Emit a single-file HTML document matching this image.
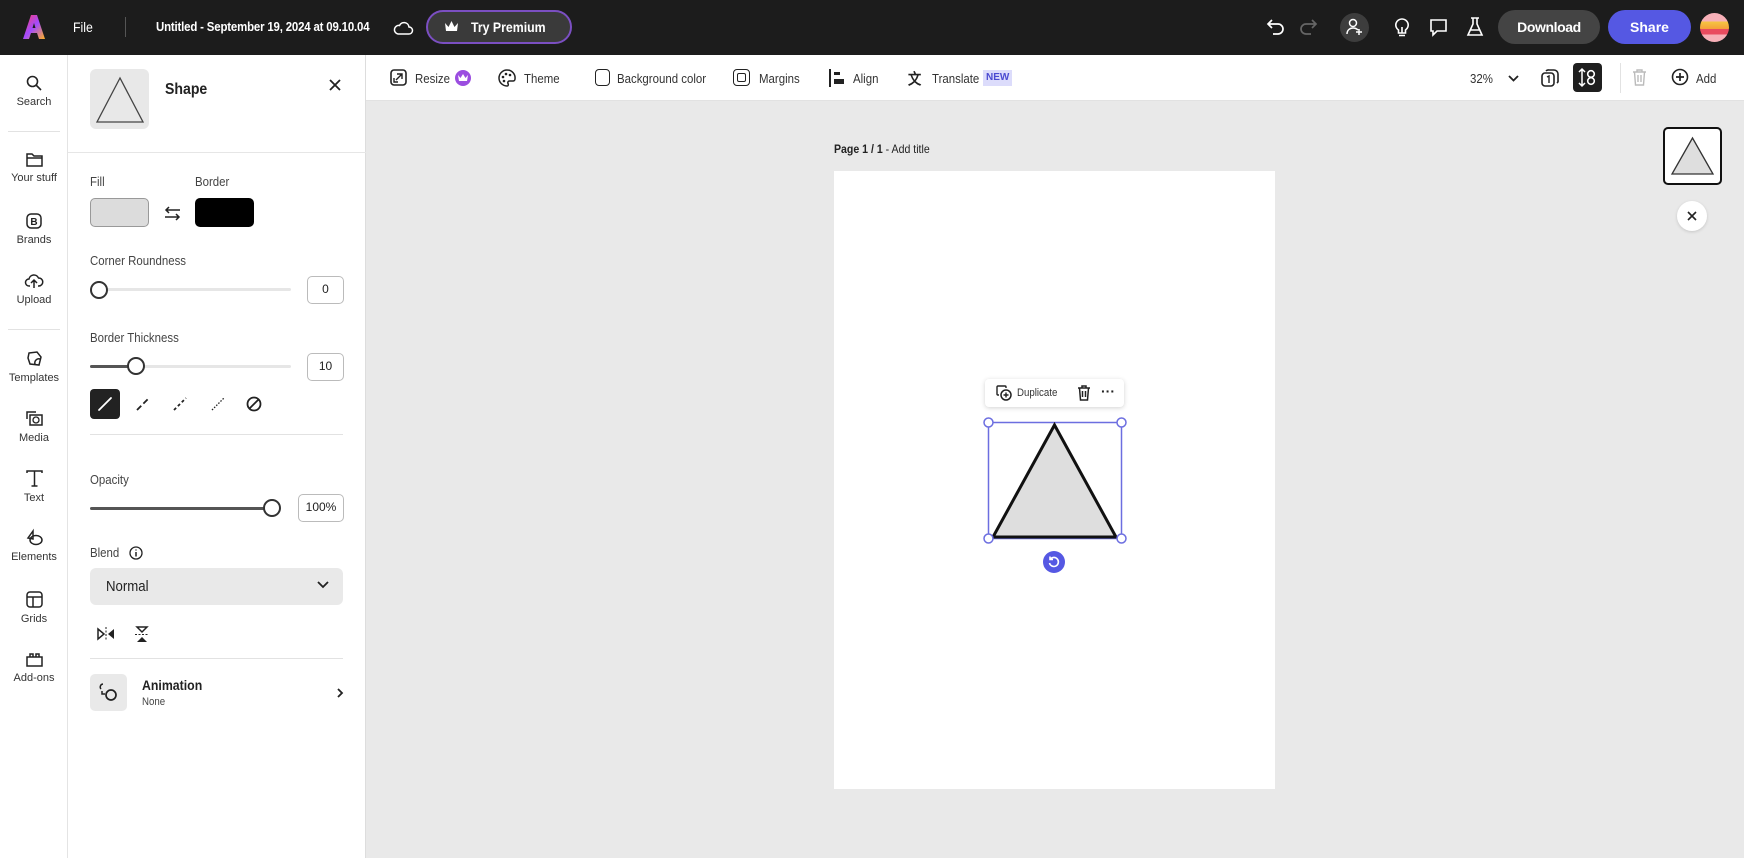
<!DOCTYPE html>
<html><head><meta charset="utf-8"><style>
*{box-sizing:border-box;margin:0;padding:0}
body{width:1744px;height:858px;overflow:hidden;font-family:"Liberation Sans",sans-serif;color:#222;background:#e9e9e9;position:relative}
.a{position:absolute}
.hdr{left:0;top:0;width:1744px;height:55px;background:#1c1c1c;color:#fff}
.t{white-space:nowrap;transform:scaleX(.88);transform-origin:0 50%}
.nc{transform:none}
.rail{left:0;top:55px;width:68px;height:803px;background:#fff;border-right:1px solid #e4e4e4}
.ri{position:absolute;left:0;width:68px;text-align:center;font-size:11px;color:#333}
.ri svg{display:block;margin:0 auto 5px}
.panel{left:68px;top:55px;width:298px;height:803px;background:#fff;border-right:1px solid #ddd}
.tb{left:366px;top:55px;width:1378px;height:46px;background:#fff;border-bottom:1px solid #e2e2e2}
.lbl{font-size:13px;color:#444}
.box{border:1.5px solid #bbb;border-radius:5px;font-size:12px;text-align:center;background:#fff}
.tbt{font-size:13px;color:#333;top:16px}
svg{overflow:visible}
</style></head><body>
<div class="a hdr">
 <svg class="a" style="left:23px;top:15px" width="22" height="24" viewBox="0 0 22 24"><defs><linearGradient id="g" x1="0" y1="0" x2="1" y2="1"><stop offset="0" stop-color="#ff3b6b"/><stop offset=".5" stop-color="#a24bff"/><stop offset="1" stop-color="#ffb020"/></linearGradient></defs><path d="M8 0h6l8 24h-6l-2-6H8l-2 6H0z M9.5 13h3L11 8z" fill="url(#g)" fill-rule="evenodd"/></svg>
 <div class="a t" style="left:73px;top:19px;font-size:14px">File</div>
 <div class="a" style="left:125px;top:17px;width:1px;height:20px;background:#555"></div>
 <div class="a t" style="left:156px;top:19px;font-size:13px;font-weight:bold;letter-spacing:-.2px">Untitled - September 19, 2024 at 09.10.04</div>
 <svg class="a" style="left:393px;top:19px" width="20" height="16" viewBox="0 0 20 16"><path d="M5 15h11a3.5 3.5 0 0 0 0-7 5 5 0 0 0-9.5-1.5A4 4 0 0 0 5 15z" fill="none" stroke="#fff" stroke-width="1.5"/></svg>
 <div class="a" style="left:426px;top:10px;width:146px;height:34px;border-radius:17px;background:#3a3a3a;border:2px solid #7b4fc2"></div>
 <svg class="a" style="left:444px;top:21px" width="15" height="12" viewBox="0 0 15 12"><path d="M1 2l3.5 4L7.5 0l3 6L14 2l-1 8H2z" fill="#fff"/></svg>
 <div class="a t" style="left:471px;top:19px;font-size:14px;font-weight:bold">Try Premium</div>
 <svg class="a" style="left:1266px;top:17px" width="20" height="20" viewBox="0 0 20 20"><path d="M6 3L2 7l4 4M2 7h10a5 5 0 0 1 0 10H7" fill="none" stroke="#fff" stroke-width="1.7"/></svg>
 <svg class="a" style="left:1298px;top:17px" width="20" height="20" viewBox="0 0 20 20"><path d="M14 3l4 4-4 4M18 7H8a5 5 0 0 0 0 10h5" fill="none" stroke="#666" stroke-width="1.7"/></svg>
 <div class="a" style="left:1340px;top:13px;width:29px;height:29px;border-radius:50%;background:#3d3d3d"></div>
 <svg class="a" style="left:1346px;top:18px" width="18" height="18" viewBox="0 0 18 18"><circle cx="7" cy="5" r="3.5" fill="none" stroke="#fff" stroke-width="1.5"/><path d="M1 16c0-4 3-6 6-6s4 1 5 2M13 11v6M10 14h6" fill="none" stroke="#fff" stroke-width="1.5"/></svg>
 <svg class="a" style="left:1394px;top:18px" width="16" height="19" viewBox="0 0 16 19"><path d="M8 1a6 6 0 0 0-3.5 11v3h7v-3A6 6 0 0 0 8 1zM5 17.5h6M8 9v6" fill="none" stroke="#fff" stroke-width="1.6"/></svg>
 <svg class="a" style="left:1429px;top:18px" width="19" height="18" viewBox="0 0 19 18"><path d="M2 2h15v11H8l-4 4v-4H2z" fill="none" stroke="#fff" stroke-width="1.6"/></svg>
 <svg class="a" style="left:1467px;top:17px" width="16" height="20" viewBox="0 0 16 20"><path d="M4 1h8M6 1v6L1 18h14L10 7V1M3.5 13h9" fill="none" stroke="#fff" stroke-width="1.6"/></svg>
 <div class="a" style="left:1498px;top:10px;width:102px;height:34px;border-radius:17px;background:#444"></div>
 <div class="a nc" style="left:1498px;top:19px;width:102px;text-align:center;font-size:14px;font-weight:bold;letter-spacing:-.4px">Download</div>
 <div class="a" style="left:1608px;top:10px;width:83px;height:34px;border-radius:17px;background:#5558e3"></div>
 <div class="a nc" style="left:1608px;top:19px;width:83px;text-align:center;font-size:14px;font-weight:bold">Share</div>
 <div class="a" style="left:1700px;top:13px;width:29px;height:29px;border-radius:50%;background:linear-gradient(#f7b0b8 0,#f7b0b8 30%,#f5c542 30%,#f5a03a 55%,#e94b5f 55%,#e94b5f 75%,#f7b0b8 75%)"></div>
</div>
<div class="a rail">
 <div class="ri" style="top:20px"><svg width="16" height="16" viewBox="0 0 16 16"><circle cx="6.5" cy="6.5" r="5" fill="none" stroke="#222" stroke-width="1.6"/><path d="M10 10l5 5" stroke="#222" stroke-width="1.6"/></svg>Search</div>
 <div class="a" style="left:8px;top:76px;width:52px;height:1px;background:#e2e2e2"></div>
 <div class="ri" style="top:97px"><svg width="17" height="15" viewBox="0 0 17 15"><path d="M1 2h5l2 2h8v10H1z M1 6h15" fill="none" stroke="#222" stroke-width="1.5"/></svg>Your stuff</div>
 <div class="ri" style="top:158px"><svg width="16" height="16" viewBox="0 0 16 16"><rect x="1" y="1" width="14" height="14" rx="4" fill="none" stroke="#222" stroke-width="1.5"/><text x="8" y="12" font-size="10" font-weight="bold" text-anchor="middle" fill="#222" font-family="Liberation Sans">B</text></svg>Brands</div>
 <div class="ri" style="top:218px"><svg width="18" height="16" viewBox="0 0 18 16"><path d="M5 13H4a3.5 3.5 0 0 1 0-7 5 5 0 0 1 9.5-1A3.5 3.5 0 0 1 14 13h-1M9 15V7M6 10l3-3 3 3" fill="none" stroke="#222" stroke-width="1.5"/></svg>Upload</div>
 <div class="a" style="left:8px;top:274px;width:52px;height:1px;background:#e2e2e2"></div>
 <div class="ri" style="top:295px"><svg width="17" height="17" viewBox="0 0 17 17"><path d="M3 3l8-1 4 5-2 8-9-1-2-6z M9 14a4 4 0 0 1 5-5" fill="none" stroke="#222" stroke-width="1.5"/></svg>Templates</div>
 <div class="ri" style="top:355px"><svg width="18" height="17" viewBox="0 0 18 17"><path d="M2 9V2h9M5 5h12v10H5z" fill="none" stroke="#222" stroke-width="1.5"/><circle cx="11" cy="10" r="3" fill="none" stroke="#222" stroke-width="1.3"/></svg>Media</div>
 <div class="ri" style="top:415px"><svg width="17" height="17" viewBox="0 0 17 17"><path d="M1 3V1h15v2M8.5 1v15M5.5 16h6" fill="none" stroke="#222" stroke-width="1.5"/></svg>Text</div>
 <div class="ri" style="top:474px"><svg width="17" height="17" viewBox="0 0 17 17"><path d="M7 2L2 9l5 1z" fill="none" stroke="#222" stroke-width="1.5"/><ellipse cx="10" cy="11" rx="6" ry="4.5" fill="none" stroke="#222" stroke-width="1.5"/></svg>Elements</div>
 <div class="ri" style="top:536px"><svg width="17" height="17" viewBox="0 0 17 17"><rect x="1" y="1" width="15" height="15" rx="3" fill="none" stroke="#222" stroke-width="1.5"/><path d="M1 6h15M7 6v10" stroke="#222" stroke-width="1.5"/></svg>Grids</div>
 <div class="ri" style="top:597px"><svg width="17" height="15" viewBox="0 0 17 15"><path d="M1 5h15v9H1z M4 5V2h3v3M10 5V2h3v3" fill="none" stroke="#222" stroke-width="1.5"/></svg>Add-ons</div>
</div>
<div class="a panel">
 <div class="a" style="left:22px;top:14px;width:59px;height:60px;background:#e8e8e8;border-radius:6px"></div>
 <svg class="a" style="left:27px;top:21px" width="50" height="48" viewBox="0 0 50 48"><path d="M25 2L2 46h46z" fill="none" stroke="#444" stroke-width="1.3"/></svg>
 <div class="a t" style="left:97px;top:26px;font-size:16px;font-weight:bold">Shape</div>
 <svg class="a" style="left:261px;top:24px" width="12" height="12" viewBox="0 0 12 12"><path d="M1 1l10 10M11 1L1 11" stroke="#222" stroke-width="1.8"/></svg>
 <div class="a" style="left:0;top:97px;width:298px;height:1px;background:#e6e6e6"></div>
 <div class="a t lbl" style="left:22px;top:119px">Fill</div>
 <div class="a t lbl" style="left:127px;top:119px">Border</div>
 <div class="a" style="left:22px;top:143px;width:59px;height:29px;background:#dcdcdc;border:1px solid #999;border-radius:5px"></div>
 <svg class="a" style="left:96px;top:151px" width="17" height="15" viewBox="0 0 17 15"><path d="M16 4H2M5 1L2 4l3 3M1 11h14M12 8l3 3-3 3" fill="none" stroke="#222" stroke-width="1.5"/></svg>
 <div class="a" style="left:127px;top:143px;width:59px;height:29px;background:#000;border-radius:5px"></div>
 <div class="a t lbl" style="left:22px;top:198px">Corner Roundness</div>
 <div class="a" style="left:22px;top:233px;width:201px;height:3px;background:#e6e6e6;border-radius:2px"></div>
 <div class="a" style="left:22px;top:226px;width:18px;height:18px;border-radius:50%;border:2px solid #333;background:#fff"></div>
 <div class="a box" style="left:239px;top:221px;width:37px;height:28px;line-height:25px">0</div>
 <div class="a t lbl" style="left:22px;top:275px">Border Thickness</div>
 <div class="a" style="left:22px;top:310px;width:201px;height:3px;background:#e6e6e6;border-radius:2px"></div>
 <div class="a" style="left:22px;top:310px;width:45px;height:3px;background:#555;border-radius:2px"></div>
 <div class="a" style="left:59px;top:302px;width:18px;height:18px;border-radius:50%;border:2px solid #333;background:#fff"></div>
 <div class="a box" style="left:239px;top:298px;width:37px;height:28px;line-height:25px">10</div>
 <div class="a" style="left:22px;top:334px;width:30px;height:30px;background:#222;border-radius:4px"></div>
 <svg class="a" style="left:30px;top:342px" width="14" height="14" viewBox="0 0 14 14"><path d="M1 13L13 1" stroke="#fff" stroke-width="1.8" stroke-linecap="round"/></svg>
 <svg class="a" style="left:68px;top:342px" width="14" height="14" viewBox="0 0 14 14"><path d="M1 13L13 1" stroke="#222" stroke-width="1.8" stroke-dasharray="6 3"/></svg>
 <svg class="a" style="left:105px;top:342px" width="14" height="14" viewBox="0 0 14 14"><path d="M1 13L13 1" stroke="#222" stroke-width="1.8" stroke-dasharray="3 2.5"/></svg>
 <svg class="a" style="left:143px;top:342px" width="14" height="14" viewBox="0 0 14 14"><path d="M1 13L13 1" stroke="#222" stroke-width="1.3" stroke-dasharray="1.5 1.5"/></svg>
 <svg class="a" style="left:178px;top:341px" width="16" height="16" viewBox="0 0 16 16"><circle cx="8" cy="8" r="6.5" fill="none" stroke="#222" stroke-width="1.8"/><path d="M3.5 12.5l9-9" stroke="#222" stroke-width="1.8"/></svg>
 <div class="a" style="left:22px;top:379px;width:253px;height:1px;background:#e2e2e2"></div>
 <div class="a t lbl" style="left:22px;top:417px">Opacity</div>
 <div class="a" style="left:22px;top:452px;width:182px;height:3px;background:#555;border-radius:2px"></div>
 <div class="a" style="left:195px;top:444px;width:18px;height:18px;border-radius:50%;border:2px solid #333;background:#fff"></div>
 <div class="a box" style="left:230px;top:439px;width:46px;height:28px;line-height:25px">100%</div>
 <div class="a t lbl" style="left:22px;top:490px">Blend</div>
 <svg class="a" style="left:61px;top:491px" width="14" height="14" viewBox="0 0 14 14"><circle cx="7" cy="7" r="6" fill="none" stroke="#222" stroke-width="1.3"/><path d="M7 6v4.5M7 3.5v1" stroke="#222" stroke-width="1.5"/></svg>
 <div class="a" style="left:22px;top:513px;width:253px;height:37px;background:#e9e9e9;border-radius:6px"></div>
 <div class="a t" style="left:38px;top:523px;font-size:15px;color:#222">Normal</div>
 <svg class="a" style="left:249px;top:526px" width="12" height="8" viewBox="0 0 12 8"><path d="M1 1l5 5 5-5" fill="none" stroke="#222" stroke-width="1.8"/></svg>
 <svg class="a" style="left:29px;top:572px" width="18" height="14" viewBox="0 0 18 14"><path d="M1 2l6 5-6 5z" fill="none" stroke="#222" stroke-width="1.5"/><path d="M17 2l-6 5 6 5z" fill="#222"/><path d="M9 0v14" stroke="#222" stroke-dasharray="2 1.5"/></svg>
 <svg class="a" style="left:67px;top:571px" width="14" height="17" viewBox="0 0 14 17"><path d="M2 1h10L7 6z" fill="none" stroke="#222" stroke-width="1.5"/><path d="M2 16h10L7 11z" fill="#222"/><path d="M0 8.5h14" stroke="#222" stroke-dasharray="2 1.5"/></svg>
 <div class="a" style="left:22px;top:603px;width:253px;height:1px;background:#e2e2e2"></div>
 <div class="a" style="left:22px;top:619px;width:37px;height:37px;background:#e9e9e9;border-radius:5px"></div>
 <svg class="a" style="left:30px;top:627px" width="22" height="22" viewBox="0 0 22 22"><path d="M5 2a3 3 0 0 0-2 5" fill="none" stroke="#222" stroke-width="1.5"/><circle cx="13" cy="13" r="5" fill="none" stroke="#222" stroke-width="1.7"/><path d="M4 9v3h3" fill="none" stroke="#222" stroke-width="1.5"/></svg>
 <div class="a t" style="left:74px;top:622px;font-size:14px;font-weight:bold">Animation</div>
 <div class="a t" style="left:74px;top:641px;font-size:11px;color:#444">None</div>
 <svg class="a" style="left:269px;top:633px" width="7" height="10" viewBox="0 0 7 10"><path d="M1 1l4 4-4 4" fill="none" stroke="#222" stroke-width="1.8"/></svg>
</div>
<div class="a tb">
 <svg class="a" style="left:24px;top:14px" width="17" height="17" viewBox="0 0 17 17"><rect x="1" y="1" width="15" height="15" rx="3" fill="none" stroke="#222" stroke-width="1.6"/><path d="M7 5h5v5M12 5L6 11M4 9v4h4" fill="none" stroke="#222" stroke-width="1.4"/></svg>
 <div class="a t tbt" style="left:49px">Resize</div>
 <div class="a" style="left:89px;top:15px;width:16px;height:16px;border-radius:50%;background:#9b4de0"></div>
 <svg class="a" style="left:92px;top:19px" width="10" height="8" viewBox="0 0 10 8"><path d="M0 1l2.5 3L5 0l2.5 4L10 1 9 7H1z" fill="#fff"/></svg>
 <svg class="a" style="left:132px;top:14px" width="18" height="18" viewBox="0 0 18 18"><path d="M9 1a8 8 0 1 0 0 16c1.5 0 1.5-1.5 1-2.5s0-2.5 1.5-2.5H15a2 2 0 0 0 2-2A8 8 0 0 0 9 1z" fill="none" stroke="#222" stroke-width="1.5"/><circle cx="5" cy="8" r="1.3" fill="#222"/><circle cx="8" cy="5" r="1.3" fill="#222"/><circle cx="12" cy="6" r="1.3" fill="#222"/><circle cx="6" cy="12" r="1.3" fill="#222"/></svg>
 <div class="a t tbt" style="left:158px">Theme</div>
 <div class="a" style="left:229px;top:14px;width:15px;height:17px;border:1.8px solid #222;border-radius:4px"></div>
 <div class="a t tbt" style="left:251px">Background color</div>
 <div class="a" style="left:367px;top:14px;width:17px;height:17px;border:1.8px solid #222;border-radius:4px"></div>
 <div class="a" style="left:371px;top:18px;width:9px;height:9px;border:1.8px solid #222;border-radius:2px"></div>
 <div class="a t tbt" style="left:393px">Margins</div>
 <div class="a" style="left:463px;top:14px;width:2px;height:18px;background:#222"></div>
 <div class="a" style="left:468px;top:17px;width:6px;height:3px;background:#222"></div>
 <div class="a" style="left:468px;top:24px;width:10px;height:5px;background:#222"></div>
 <div class="a t tbt" style="left:487px">Align</div>
 <div class="a t" style="left:542px;top:13px;font-size:15px;font-weight:bold">文</div>
 <div class="a t tbt" style="left:566px">Translate</div>
 <div class="a nc" style="left:617px;top:15px;height:16px;line-height:16px;padding:0 3px;background:#dcdcfb;color:#4b4bd1;font-size:10px;font-weight:bold">NEW</div>
 <div class="a t tbt" style="left:1104px;top:16px">32%</div>
 <svg class="a" style="left:1142px;top:20px" width="11" height="7" viewBox="0 0 11 7"><path d="M1 1l4.5 4.5L10 1" fill="none" stroke="#222" stroke-width="1.8"/></svg>
 <svg class="a" style="left:1175px;top:14px" width="18" height="18" viewBox="0 0 18 18"><rect x="1" y="4" width="12" height="13" rx="3" fill="none" stroke="#222" stroke-width="1.6"/><path d="M5 2a3 3 0 0 1 3-1h5a4 4 0 0 1 4 4v6a3 3 0 0 1-1 3" fill="none" stroke="#222" stroke-width="1.6"/><path d="M6 8l2-1v7" fill="none" stroke="#222" stroke-width="1.4"/></svg>
 <div class="a" style="left:1207px;top:8px;width:29px;height:29px;background:#1f1f1f;border-radius:4px"></div>
 <svg class="a" style="left:1212px;top:13px" width="19" height="19" viewBox="0 0 19 19"><path d="M4 1v17M1 4l3-3 3 3M1 15l3 3 3-3" fill="none" stroke="#fff" stroke-width="1.5"/><circle cx="13" cy="6" r="3.3" fill="none" stroke="#fff" stroke-width="1.6"/><circle cx="13" cy="13" r="3.3" fill="none" stroke="#fff" stroke-width="1.6"/></svg>
 <div class="a" style="left:1254px;top:8px;width:1px;height:30px;background:#e2e2e2"></div>
 <svg class="a" style="left:1266px;top:14px" width="15" height="17" viewBox="0 0 15 17"><path d="M1 3h13M5 3V1h5v2M2.5 3l1 13h8l1-13M6 6v7M9 6v7" fill="none" stroke="#bbb" stroke-width="1.4"/></svg>
 <svg class="a" style="left:1305px;top:13px" width="18" height="18" viewBox="0 0 18 18"><circle cx="9" cy="9" r="7.5" fill="none" stroke="#222" stroke-width="1.6"/><path d="M9 5v8M5 9h8" stroke="#222" stroke-width="1.7"/></svg>
 <div class="a t tbt" style="left:1330px">Add</div>
</div>
<div class="a t" style="left:834px;top:142px;font-size:12px;color:#222"><b>Page 1 / 1</b> - Add title</div>
<div class="a" style="left:834px;top:171px;width:441px;height:618px;background:#fff"></div>
<div class="a" style="left:985px;top:379px;width:139px;height:28px;background:#fff;border-radius:4px;box-shadow:0 1px 5px rgba(0,0,0,.18)"></div>
<svg class="a" style="left:996px;top:385px" width="16" height="16" viewBox="0 0 16 16"><path d="M10 3V2a1 1 0 0 0-1-1H2a1 1 0 0 0-1 1v7a1 1 0 0 0 1 1h1" fill="none" stroke="#222" stroke-width="1.4"/><circle cx="10" cy="10" r="5" fill="none" stroke="#222" stroke-width="1.5"/><path d="M10 7.5v5M7.5 10h5" stroke="#222" stroke-width="1.4"/></svg>
<div class="a t" style="left:1017px;top:387px;font-size:11px;color:#333">Duplicate</div>
<svg class="a" style="left:1077px;top:385px" width="14" height="16" viewBox="0 0 14 16"><path d="M1 3h12M5 3V1h4v2M2.5 3l1 12h7l1-12M5.5 6v6M8.5 6v6" fill="none" stroke="#222" stroke-width="1.5"/></svg>
<div class="a nc" style="left:1101px;top:383px;font-size:14px;font-weight:bold;color:#222">···</div>
<svg class="a" style="left:985px;top:420px" width="140" height="125" viewBox="0 0 140 125">
 <rect x="3.5" y="2.5" width="133" height="116" fill="none" stroke="#6c6ee0" stroke-width="1.5"/>
 <path d="M69.5 5L8 117h123z" fill="#dedede" stroke="#111" stroke-width="3"/>
 <circle cx="3.5" cy="2.5" r="4.5" fill="#fff" stroke="#6c6ee0" stroke-width="1.5"/>
 <circle cx="136.5" cy="2.5" r="4.5" fill="#fff" stroke="#6c6ee0" stroke-width="1.5"/>
 <circle cx="3.5" cy="118.5" r="4.5" fill="#fff" stroke="#6c6ee0" stroke-width="1.5"/>
 <circle cx="136.5" cy="118.5" r="4.5" fill="#fff" stroke="#6c6ee0" stroke-width="1.5"/>
</svg>
<div class="a" style="left:1043px;top:551px;width:22px;height:22px;border-radius:50%;background:#5558e3"></div>
<svg class="a" style="left:1048px;top:556px" width="12" height="12" viewBox="0 0 12 12"><path d="M2.5 3A4.5 4.5 0 1 1 1.5 7M2 .5v3h3" fill="none" stroke="#fff" stroke-width="1.6"/></svg>
<div class="a" style="left:1663px;top:127px;width:59px;height:58px;border:2px solid #111;border-radius:5px;background:#fff"></div>
<svg class="a" style="left:1670px;top:136px" width="45" height="40" viewBox="0 0 45 40"><path d="M22.5 2L2 38h41z" fill="#dedede" stroke="#333" stroke-width="1.3"/></svg>
<div class="a" style="left:1677px;top:201px;width:30px;height:30px;border-radius:50%;background:#fff;box-shadow:0 1px 3px rgba(0,0,0,.15)"></div>
<svg class="a" style="left:1687px;top:211px" width="10" height="10" viewBox="0 0 10 10"><path d="M1 1l8 8M9 1L1 9" stroke="#222" stroke-width="1.6"/></svg>
</body></html>
